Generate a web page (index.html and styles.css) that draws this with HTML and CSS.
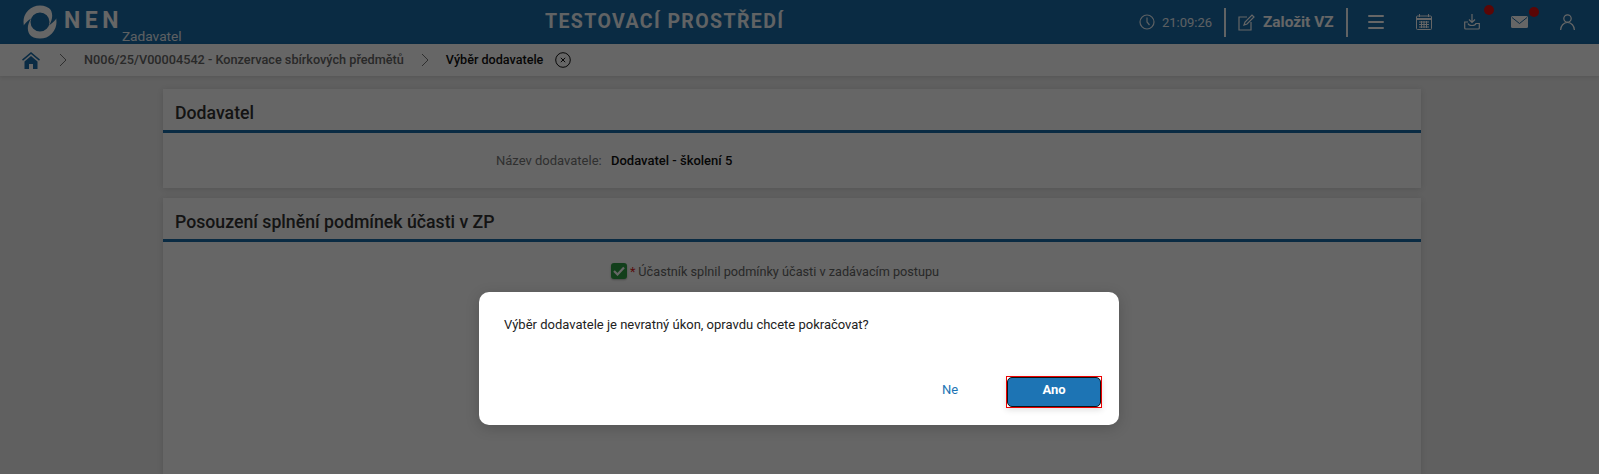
FILE: index.html
```html
<!DOCTYPE html>
<html lang="cs">
<head>
<meta charset="utf-8">
<title>Výběr dodavatele</title>
<link rel="stylesheet" href="styles.css">
</head>
<body>
<header class="topbar">
  <div class="brand">
    <svg class="logo" width="34" height="34" viewBox="0 0 34 34">
      <circle cx="17" cy="17" r="13" fill="none" stroke="#fff" stroke-width="7"/>
      <path d="M26 2.500C30 7 30.500 13 26 20.500 31 17 34 14 34.500 10 33 6 30 3.500 26 2.500Z" fill="#196ca9"/>
      <path d="M8 31.500C4 27 3.500 21 8 13.500 3 17 0 20-.5 24 1 28 4 30.500 8 31.500Z" fill="#196ca9"/>
    </svg>
    <span class="nen">NEN</span>
    <span class="role">Zadavatel</span>
  </div>
  <div class="env">TESTOVACÍ PROSTŘEDÍ</div>
  <div class="tools">
    <svg class="clock" width="16" height="16" viewBox="0 0 16 16" fill="none" stroke="#fff" stroke-width="1.200"><circle cx="8" cy="8" r="7"/><path d="M8 3.500V8l2.500 3"/></svg>
    <span class="time">21:09:26</span>
    <span class="sep"></span>
    <div class="create">
      <svg width="17" height="17" viewBox="0 0 17 17" fill="none" stroke="#fff" stroke-width="1.200"><path d="M9 3H1v13h12V8"/><path d="M6 11l1-3 7-7 2 2-7 7-3 1Z"/></svg>
      <span>Založit VZ</span>
    </div>
    <span class="sep"></span>
    <svg class="menu" width="16" height="14" viewBox="0 0 16 14" fill="#fff"><rect y="0" width="16" height="2" rx="1"/><rect y="6" width="16" height="2" rx="1"/><rect y="12" width="16" height="2" rx="1"/></svg>
    <svg class="cal" width="16" height="16" viewBox="0 0 16 16" fill="none" stroke="#fff" stroke-width="1"><rect x=".5" y="2" width="15" height="13.500" rx="1"/><path d="M0 5h16" stroke-width="2"/><path d="M3.500 0v3M12.500 0v3M3 8h10M3 10.500h10M3 13h10M5.500 7v7M8 7v7M10.500 7v7"/></svg>
    <span class="badged dl">
      <svg width="16" height="16" viewBox="0 0 16 16" fill="none" stroke="#fff" stroke-width="1.200"><path d="M8 0v8M5 5.500 8 8.500l3-3"/><path d="M4 8H.7v6a1 1 0 0 0 1 1h12.600a1 1 0 0 0 1-1V9.500H12c-.5 1.500-2 2-4 2s-3.500-.5-4-2"/></svg>
      <i class="dot"></i>
    </span>
    <span class="badged mail">
      <svg width="17" height="12" viewBox="0 0 17 12"><rect width="17" height="12" rx="1.500" fill="#fff"/><path d="M1 1.500 8.500 7.500 16 1.500" fill="none" stroke="#196ca9" stroke-width="1"/></svg>
      <i class="dot"></i>
    </span>
    <svg class="user" width="15" height="16" viewBox="0 0 15 16" fill="none" stroke="#fff" stroke-width="1.200"><circle cx="7.500" cy="4.500" r="3.700"/><path d="M.6 16c0-4 3-7.500 6.900-7.500s6.900 3.500 6.900 7.500"/></svg>
  </div>
</header>

<nav class="crumbs">
  <svg class="home" width="18" height="17" viewBox="0 0 18 17" fill="#1a6dab"><path d="M9 0 0 7.500l1 1.200L9 2l8 6.700 1-1.200Z"/><path d="M9 4 2.500 9.500V17H7v-5h4v5h4.500V9.500Z"/></svg>
  <svg class="chev" width="8" height="14" viewBox="0 0 8 14" fill="none" stroke="#777" stroke-width="1"><path d="m1 1 6 6-6 6"/></svg>
  <span class="crumb">N006/25/V00004542 - Konzervace sbírkových předmětů</span>
  <svg class="chev" width="8" height="14" viewBox="0 0 8 14" fill="none" stroke="#777" stroke-width="1"><path d="m1 1 6 6-6 6"/></svg>
  <span class="crumb current">Výběr dodavatele</span>
  <svg class="close" width="16" height="16" viewBox="0 0 16 16" fill="none" stroke="#111" stroke-width="1"><circle cx="8" cy="8" r="7.300"/><path d="m5.800 5.800 4.400 4.400M10.200 5.800l-4.400 4.400"/></svg>
</nav>

<main class="content">
  <section class="card">
    <h2 class="card-title">Dodavatel</h2>
    <div class="field">
      <span class="field-label">Název dodavatele:</span>
      <span class="field-value">Dodavatel - školení 5</span>
    </div>
  </section>
  <section class="card tall">
    <h2 class="card-title">Posouzení splnění podmínek účasti v ZP</h2>
    <div class="check">
      <span class="box"><svg width="12" height="10" viewBox="0 0 12 10" fill="none" stroke="#fff" stroke-width="2.200"><path d="m1 5 3.500 3.500L11 1.500"/></svg></span>
      <span class="req">*</span>
      <span>Účastník splnil podmínky účasti v zadávacím postupu</span>
    </div>
  </section>
</main>

<div class="overlay"></div>

<div class="dialog">
  <p class="message">Výběr dodavatele je nevratný úkon, opravdu chcete pokračovat?</p>
  <div class="actions">
    <button class="btn-no">Ne</button>
    <span class="focus-frame"><button class="btn-yes">Ano</button></span>
  </div>
</div>
</body>
</html>
```
FILE: styles.css
```css
* { box-sizing: border-box; }
html { height: 100%; overflow: hidden; }
body {
  margin: 0;
  height: 474px;
  overflow: hidden;
  display: flex;
  flex-direction: column;
  background: #efefef;
  font-family: Roboto, "Liberation Sans", sans-serif;
  font-size: 13px;
  color: #333;
}
.topbar {
  flex: none;
  height: 44px;
  background: #196ca9;
  color: #fff;
  display: flex;
  align-items: center;
  padding-left: 23px;
  position: relative;
}
.brand { display: flex; align-items: flex-start; width: 380px; height: 44px; padding-top: 5px; }
.logo { display: block; flex: none; }
.nen {
  font-size: 23px;
  font-weight: 700;
  letter-spacing: 4.500px;
  margin-left: 7px;
  line-height: 30px;
  margin-top: 1px;
}
.role { font-size: 13.700px; margin-left: -1px; margin-top: 23px; line-height: 16px; opacity: .9; }
.env {
  position: absolute;
  left: 545px;
  top: 0;
  font-size: 19.500px;
  font-weight: 700;
  letter-spacing: 1.400px;
  line-height: 44px;
  opacity: .95;
}
.tools {
  margin-left: auto;
  display: flex;
  align-items: center;
  height: 44px;
  padding-right: 24px;
}
.time { font-size: 13px; margin-left: 7px; opacity: .9; width: 50px; }
.sep { width: 2px; height: 29px; background: #fff; opacity: .95; }
.clock { opacity: .9; }
.time + .sep { margin-left: 12px; }
.create {
  display: flex;
  align-items: center;
  gap: 8px;
  font-size: 15.400px;
  font-weight: 700;
  margin-left: 12px;
  margin-right: 12px;
  width: 96px;
}
.menu { margin-left: 20px; }
.cal { margin-left: 32px; }
.badged { position: relative; display: flex; }
.dl { margin-left: 32px; }
.mail { margin-left: 31px; }
.user { margin-left: 32px; }
.dot {
  position: absolute;
  width: 10px;
  height: 10px;
  border-radius: 50%;
  background: #e00f0f;
  top: -9px;
  right: -14px;
}
.mail .dot { top: -9px; right: -11px; }
.crumbs {
  flex: none;
  height: 32px;
  background: #fff;
  display: flex;
  align-items: center;
  padding-left: 22px;
  font-size: 12.700px;
  font-weight: 500;
  color: #777;
  box-shadow: 0 1px 4px rgba(0, 0, 0, .12);
  position: relative;
}
.home { margin-right: 19px; }
.chev { margin-right: 17px; }
.crumb { margin-right: 17px; color: #666; line-height: 32px; }
.crumb.current { color: #111; margin-right: 12px; font-size: 12.600px; }
.content {
  flex: 1;
  min-height: 0;
  width: 1258px;
  margin: 13px 0 0 163px;
  display: flex;
  flex-direction: column;
  gap: 10px;
}
.card { background: #fff; flex: none; height: 99px; box-shadow: 0 1px 6px rgba(0, 0, 0, .12); }
.card.tall { flex: 1; height: auto; }
.card-title {
  margin: 0;
  height: 44px;
  padding: 0 12px;
  font-size: 17.700px;
  font-weight: 500;
  line-height: 49px;
  color: #333;
  border-bottom: 3px solid #196ca9;
}
.field { display: flex; align-items: center; height: 55px; padding-left: 333px; }
.field-label { color: #777; width: 115px; white-space: nowrap; }
.field-value { color: #111; font-weight: 500; }
.check {
  display: flex;
  align-items: center;
  justify-content: center;
  margin-top: 21px;
  color: #666;
  font-size: 12.700px;
  padding-right: 34px;
}
.box {
  width: 16px;
  height: 16px;
  border-radius: 3px;
  background: #2e9e44;
  display: flex;
  align-items: center;
  justify-content: center;
  box-shadow: 0 1px 2px rgba(0, 0, 0, .3);
  margin-right: 3px;
}
.req { color: #d22; margin-right: 3px; }
.overlay { position: absolute; inset: 0; background: rgba(0, 0, 0, .6); }
.dialog {
  position: absolute;
  left: 479px;
  top: 292px;
  width: 640px;
  height: 133px;
  background: #fff;
  border-radius: 10px;
  box-shadow: 0 3px 14px rgba(0, 0, 0, .18);
  padding: 25px;
  display: flex;
  flex-direction: column;
}
.message { margin: 0; font-size: 13px; line-height: 16px; color: #222; }
.actions {
  margin-top: auto;
  margin-bottom: -8px;
  margin-right: -8px;
  display: flex;
  justify-content: flex-end;
  align-items: center;
}
.btn-no, .btn-yes { font-family: Roboto, "Liberation Sans", sans-serif; font-size: 13px; cursor: pointer; }
.btn-no { border: 0; background: none; color: #1d74b4; width: 60px; margin-right: 26px; padding: 0 0 5px; }
.focus-frame {
  display: block;
  width: 96px;
  height: 32px;
  border: 1px solid #e00;
  box-shadow: 0 2px 6px rgba(0, 0, 0, .12);
}
.btn-yes {
  display: block;
  width: 100%;
  height: 100%;
  background: #1d74b4;
  color: #fff;
  font-weight: 700;
  border: 1px solid #111;
  border-radius: 5px;
  padding: 0 0 5px;
}
```
